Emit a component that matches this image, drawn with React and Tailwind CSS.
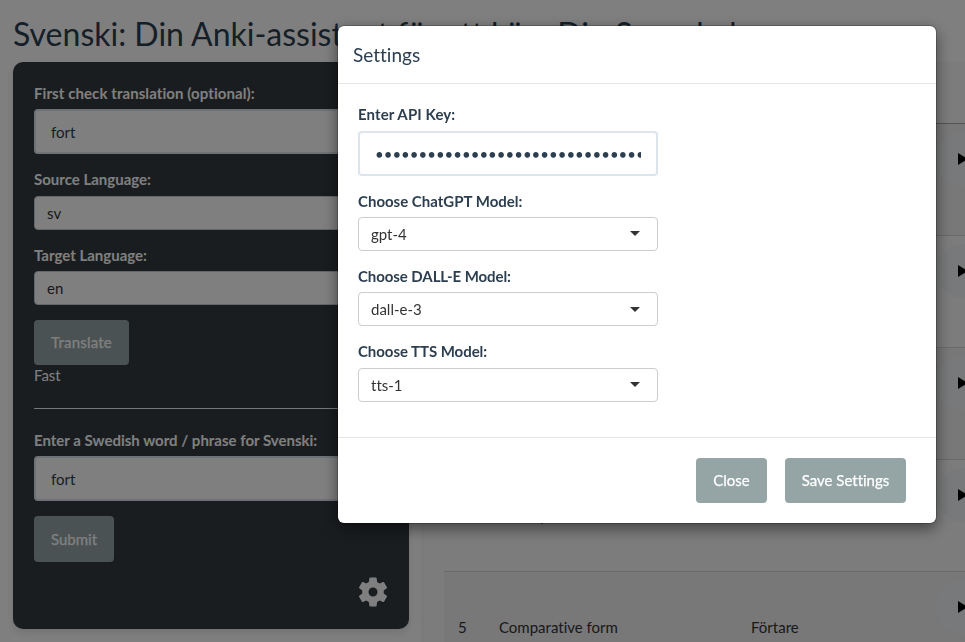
import React from "react";

function Label({ children, className = "" }) {
  return (
    <div className={`mb-[5px] h-[21.43px] whitespace-nowrap font-bold leading-[21.43px] ${className}`}>{children}</div>
  );
}

function TextField({ label, labelClass, type = "text", value, inputClass = "" }) {
  return (
    <div className="mb-[15px]">
      <Label className={labelClass}>{label}</Label>
      <input
        type={type}
        readOnly
        value={value}
        className={`block h-[45px] w-full rounded-[4px] border-2 border-[#dce4ec] bg-white px-[15px] text-[15px] text-[#2c3e50] outline-none ${inputClass}`}
      />
    </div>
  );
}

function SelectField({ label, labelClass, value }) {
  return (
    <div className="mb-[15px]">
      <Label className={labelClass}>{label}</Label>
      <div className="flex h-[34px] w-full items-center justify-between rounded-[4px] border border-[#ccc] bg-white pl-3 pr-[17px] text-[#333]">
        <span className="leading-[20px]">{value}</span>
        <span className="h-0 w-0 border-x-[5px] border-t-[5px] border-x-transparent border-t-[#333]" />
      </div>
    </div>
  );
}

function Button({ children, className = "" }) {
  return (
    <button
      className={`block whitespace-nowrap rounded-[4px] bg-[#95a5a6] text-center text-[15px] text-white [-webkit-text-stroke:0.25px_white] ${className}`}
    >
      {children}
    </button>
  );
}

function Gear() {
  return (
    <svg viewBox="0 0 24 24" className="h-9 w-9 fill-white">
      <path d="M19.14 12.94c.04-.3.06-.61.06-.94 0-.32-.02-.64-.07-.94l2.03-1.58c.18-.14.23-.41.12-.61l-1.92-3.32c-.12-.22-.37-.29-.59-.22l-2.39.96c-.5-.38-1.03-.7-1.62-.94l-.36-2.54c-.04-.24-.24-.41-.48-.41h-3.84c-.24 0-.43.17-.47.41l-.36 2.54c-.59.24-1.13.57-1.62.94l-2.39-.96c-.22-.08-.47 0-.59.22L2.74 8.87c-.12.21-.08.47.12.61l2.03 1.58c-.05.3-.09.63-.09.94s.02.64.07.94l-2.03 1.58c-.18.14-.23.41-.12.61l1.92 3.32c.12.22.37.29.59.22l2.39-.96c.5.38 1.03.7 1.62.94l.36 2.54c.05.24.24.41.48.41h3.84c.24 0 .44-.17.47-.41l.36-2.54c.59-.24 1.13-.56 1.62-.94l2.39.96c.22.08.47 0 .59-.22l1.92-3.32c.12-.22.07-.47-.12-.61l-2.01-1.58zM12 15a3 3 0 1 1 0-6 3 3 0 0 1 0 6z" />
    </svg>
  );
}

function AudioPlayer() {
  return (
    <div className="mt-2 flex h-[54px] w-[300px] items-center rounded-full bg-[#f1f3f4] pl-[22px]">
      <svg viewBox="0 0 10 12" className="h-3 w-[10px] fill-black">
        <path d="M0 0 L10 6 L0 12 Z" />
      </svg>
    </div>
  );
}

const rows = [
  { id: 1, form: "", word: "" },
  { id: 2, form: "", word: "" },
  { id: 3, form: "", word: "" },
  { id: 4, form: "Plural positive", word: "" },
  { id: 5, form: "Comparative form", word: "Förtare" },
];

function ResultsTable() {
  return (
    <div className="h-[700px] w-[900px] shrink-0 rounded-[10px] bg-[#f8f8f8] pl-5 shadow-[0_4px_8px_rgba(0,0,0,0.1)]">
      <div className="h-[62px] border-b border-[#a8a8a8]" />
      {rows.map((r) => (
        <div key={r.id} className={`flex h-28 border-b border-[#d4d4d4] text-[#333] ${r.id % 2 ? "bg-[#f0f0f0]" : ""}`}>
          <div className="w-[55px] self-center pl-[14px]">{r.id}</div>
          <div className="w-[252px] self-center">{r.form}</div>
          <div className="w-[185px] self-center">{r.word}</div>
          <AudioPlayer />
        </div>
      ))}
    </div>
  );
}

function SettingsModal() {
  return (
    <div className="fixed inset-0 flex items-start bg-black/50 pl-[338px] pt-[26px]">
      <div className="h-[497px] w-[598px] rounded-[6px] bg-white shadow-[0_0_0_1px_rgba(0,0,0,0.2),0_5px_15px_rgba(0,0,0,0.5)]">
        <div className="h-[58px] border-b border-[#e5e5e5] pl-[15px] pt-[15px] text-[19px] leading-[27px]">Settings</div>
        <div className="h-[353px] pl-5 pt-[20.15px]">
          <div className="w-[300px]">
            <TextField
              label="Enter API Key:"
              labelClass="tracking-[0.1px]"
              type="password"
              value="0123456789012345678901234567890123456789"
              inputClass="pt-px"
            />
            <SelectField label="Choose ChatGPT Model:" value="gpt-4" />
            <SelectField label="Choose DALL-E Model:" labelClass="tracking-[-0.08px]" value="dall-e-3" />
            <SelectField label="Choose TTS Model:" labelClass="tracking-[-0.05px]" value="tts-1" />
          </div>
        </div>
        <div className="flex justify-end gap-[18px] border-t border-[#e5e5e5] pr-[30px] pt-5">
          <Button className="h-[45px] w-[71px]">Close</Button>
          <Button className="h-[45px] w-[121px]">Save Settings</Button>
        </div>
      </div>
    </div>
  );
}

export default function App() {
  return (
    <div className="h-[642px] w-[965px] overflow-hidden bg-white font-['Lato',sans-serif] text-[15px] leading-[21.43px] text-[#2c3e50] [font-variant-ligatures:none]">
      <h1 className="h-[62px] whitespace-nowrap pl-[13px] pt-[16px] text-[32px] leading-[35px]">
        Svenski: Din Anki-assistent för <span className="tracking-[-0.25px]">att kära </span>Din Svenska!
      </h1>
      <div className="flex items-start gap-[15px] pl-[13px]">
        <div className="h-[567px] w-[396px] shrink-0 rounded-[10px] bg-[#343a40] px-[21px] pt-[20.9px] text-white shadow-[0_4px_8px_rgba(0,0,0,0.1)]">
          <TextField label="First check translation (optional):" labelClass="tracking-[0.08px]" value="fort" />
          <SelectField label="Source Language:" value="sv" />
          <SelectField label="Target Language:" value="en" />
          <Button className="h-[45px] w-[95px] tracking-[0.2px]">Translate</Button>
          <div>Fast</div>
          <div className="mb-[20.9px] mt-[21.4px] h-px bg-[#ecf0f1]" />
          <TextField label="Enter a Swedish word / phrase for Svenski:" value="fort" inputClass="pt-px" />
          <Button className="h-[46px] w-[80px]">Submit</Button>
          <div className="-mr-[3px] mt-[11.6px] flex justify-end">
            <Gear />
          </div>
        </div>
        <ResultsTable />
      </div>
      <SettingsModal />
    </div>
  );
}
